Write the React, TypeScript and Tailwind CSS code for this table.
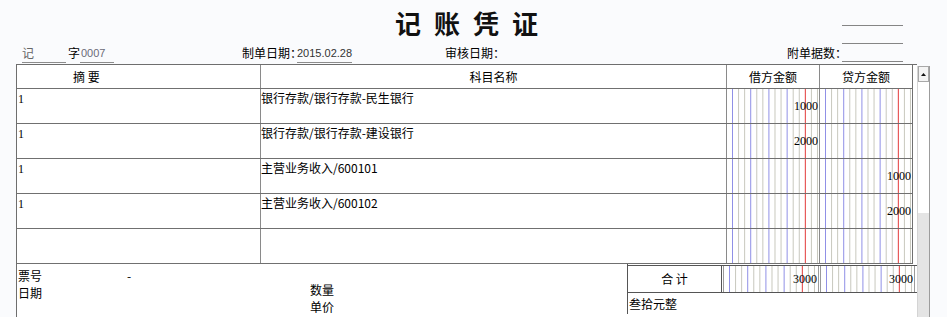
const rows = [
  { summary: "1", account: "银行存款/银行存款-民生银行", debit: "1000", credit: "" },
  { summary: "1", account: "银行存款/银行存款-建设银行", debit: "2000", credit: "" },
  { summary: "1", account: "主营业务收入/600101", debit: "", credit: "1000" },
  { summary: "1", account: "主营业务收入/600102", debit: "", credit: "2000" },
  { summary: "", account: "", debit: "", credit: "" },
]

// ruled digit columns of a ledger cell: blue every three places, red before jiao/fen
function Ledger() {
  const lineColor = (i: number) => (i === 12 ? "#e23a3a" : i % 3 === 0 ? "#9090e6" : "#c8c8be")
  return (
    <svg className="absolute inset-0 h-full w-full">
      {Array.from({ length: 15 }, (_, i) => {
        const x = 5.5 + i * 6.07
        return <line key={i} x1={x} x2={x} y1="0" y2="100%" stroke={lineColor(i)} strokeWidth="1" />
      })}
    </svg>
  )
}

function Amount({ value, className }: { value: string; className: string }) {
  return (
    <div className={`relative flex items-center justify-end ${className}`}>
      <Ledger />
      <span className="relative pr-[1px] font-['Liberation_Serif',serif] text-[12px] text-black">{value}</span>
    </div>
  )
}

export default function App() {
  return (
    <div className="w-[947px] h-[317px] overflow-hidden bg-[#fafbfd] text-[12px] leading-[14px] text-black font-['Noto_Sans_CJK_SC',sans-serif]">
      {/* title */}
      <div className="grid h-[44px] grid-cols-[1fr_auto_1fr]">
        <div />
        <div className="mr-[14px] flex gap-[13px] pt-[8px] text-[26px] leading-[30px] font-bold text-[#111]">
          <span>记</span>
          <span>账</span>
          <span>凭</span>
          <span>证</span>
        </div>
        <div className="flex flex-col items-end gap-[17px] pr-[44px] pt-[25px]">
          <div className="h-px w-[61px] bg-[#858585]" />
          <div className="h-px w-[61px] bg-[#858585]" />
        </div>
      </div>

      {/* voucher info */}
      <div className="flex h-[20px] items-start whitespace-nowrap leading-[18px]">
        <span className="ml-[22px] w-[44px] border-b border-[#8c8c8c] text-[#666]">记</span>
        <span className="ml-[2px] w-[12px]">字</span>
        <span className="w-[34px] border-b border-[#8c8c8c] pl-[1px] font-['Liberation_Sans',sans-serif] text-[11px] text-[#6a6a78]">0007</span>
        <span className="ml-[128px] w-[55px] shrink-0">制单日期：</span>
        <span className="w-[55px] border-b border-[#8c8c8c] font-['Liberation_Sans',sans-serif] text-[11px] text-[#333]">2015.02.28</span>
        <span className="ml-[93px] w-[60px] shrink-0">审核日期：</span>
        <span className="ml-[282px] w-[55px] shrink-0">附单据数：</span>
        <span className="h-[18px] w-[61px] shrink-0 border-b border-[#858585]" />
      </div>

      <div className="ml-[16px] flex">
        {/* voucher table */}
        <div className="w-[901px] border-l border-t border-b border-[#6e6e6e] bg-white">
          <div className="w-[896px]">
            <div className="flex h-[24px] border-b border-[#707070]">
              <div className="w-[244px] border-r border-[#8a8a8a] pl-[56px] pt-[5px]">摘 要</div>
              <div className="w-[466px] border-r border-[#8a8a8a] pt-[5px] text-center">科目名称</div>
              <div className="w-[93px] border-r border-[#8a8a8a] pt-[5px] text-center">借方金额</div>
              <div className="w-[93px] border-r border-[#707070] pt-[5px] text-center">贷方金额</div>
            </div>
            {rows.map((row, i) => (
              <div key={i} className="flex h-[35px] border-b border-[#707070]">
                <div className="w-[244px] border-r border-[#8a8a8a] pl-[1px] pt-[3px] font-['Liberation_Serif',serif]">{row.summary}</div>
                <div className="w-[466px] border-r border-[#8a8a8a] pt-[2px]">{row.account}</div>
                <Amount value={row.debit} className="w-[93px] border-r border-[#8a8a8a]" />
                <Amount value={row.credit} className="w-[93px] border-r border-[#707070]" />
              </div>
            ))}
          </div>

          {/* totals */}
          <div className="flex h-[50px]">
            <div className="flex w-[611px] border-r border-[#555]">
              <div className="w-[110px] pl-[1px] pt-[3px] leading-[17px]">
                <div>票号</div>
                <div>日期</div>
              </div>
              <div className="w-[183px] pt-[3px] leading-[17px]">-</div>
              <div className="pt-[17px] leading-[17px]">
                <div>数量</div>
                <div>单价</div>
              </div>
            </div>
            <div className="flex flex-1 flex-col">
              <div className="mt-[1px] flex h-[28px] border-y border-[#555]">
                <div className="flex w-[94px] items-center justify-center border-r border-[#555]">合 计</div>
                <Amount value="3000" className="ml-[1px] w-[96px] border-x border-[#9a9a9a]" />
                <Amount value="3000" className="ml-[1px] w-[95px] border-x border-[#9a9a9a]" />
              </div>
              <div className="pl-[1px] pt-[4px]">叁拾元整</div>
            </div>
          </div>
        </div>

        {/* scrollbar */}
        <div className="mt-[2px] flex h-[260px] w-[13px] flex-col border-l border-r border-l-[#d4d4d4] border-r-[#9c9c9c] bg-white">
          <div className="flex h-[16px] items-center justify-center border border-[#a8a8a8] bg-[#f4f4f4]">
            <svg width="5" height="3" viewBox="0 0 5 3">
              <path d="M2.5 0L5 3H0z" fill="#111" />
            </svg>
          </div>
          <div className="h-[131px]" />
          <div className="flex-1 bg-[#e4e4e4]" />
        </div>
      </div>
    </div>
  )
}
